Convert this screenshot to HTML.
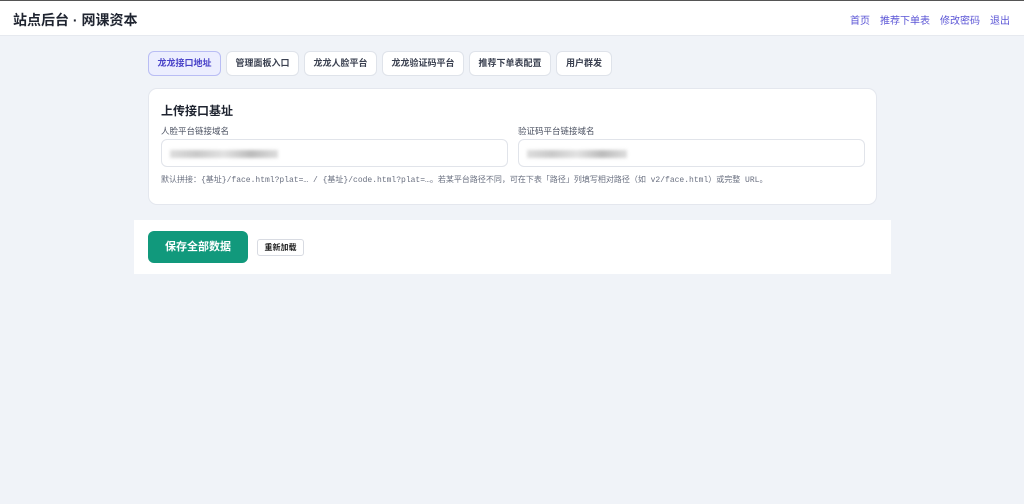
<!DOCTYPE html>
<html><head><meta charset="utf-8"><style>
*{box-sizing:border-box;margin:0;padding:0}
body{width:1024px;height:504px;background:#f0f3f8;font-family:"Liberation Sans","Noto Sans CJK SC",sans-serif;position:relative;overflow:hidden}
.top{position:absolute;left:0;top:0;width:1024px;height:1px;background:#555;z-index:5}
.hd{position:absolute;left:0;top:0;width:1024px;height:36px;background:#fff;border-bottom:1px solid #e6e9ef}
.hd h1{position:absolute;left:13px;top:10px;font-size:14px;font-weight:bold;color:#1f2430}
.nav{position:absolute;right:14px;top:12px;font-size:10px;color:#5b55d6}
.nav span{margin-left:10px}
.tab{position:absolute;top:51px;height:25px;border:1px solid #dfe3ea;background:#fff;border-radius:6px;font-size:9px;font-weight:bold;color:#3a4050;text-align:center;line-height:23px}
.tab.a{background:#eceefe;border-color:#b9bdf4;color:#4842c8}
.card{position:absolute;left:148px;top:88px;width:729px;height:117px;background:#fff;border:1px solid #e4e7ee;border-radius:9px}
.t{position:absolute;left:12px;top:13px;font-size:12px;font-weight:bold;color:#1f2430}
.lb{position:absolute;top:36px;font-size:8.5px;color:#4a5060}
.in{position:absolute;top:50px;height:28px;border:1px solid #e1e4ea;border-radius:6px;background:#fff}
.blur{position:absolute;top:10px;height:8px;background:linear-gradient(90deg,#ddd,#c9c9c9,#e2e2e2,#bbb,#ddd);filter:blur(1.5px)}
.hint{position:absolute;left:12px;top:85px;font-size:8px;color:#6a7080;white-space:nowrap;font-family:"Liberation Mono","Noto Sans CJK SC",monospace}
.bar{position:absolute;left:134px;top:220px;width:757px;height:54px;background:#fff}
.save{position:absolute;left:14px;top:11px;width:100px;height:32px;background:#11997c;border-radius:6px;color:#fff;font-size:11px;font-weight:bold;text-align:center;line-height:32px}
.re{position:absolute;left:123px;top:19px;width:47px;height:17px;border:1px solid #d8dbe2;border-radius:3px;font-size:8px;font-weight:bold;text-align:center;line-height:15px;color:#222}
</style></head><body>
<div class="top"></div>
<div class="hd"><h1>站点后台 · 网课资本</h1><div class="nav"><span>首页</span><span>推荐下单表</span><span>修改密码</span><span>退出</span></div></div>
<div class="tab a" style="left:148px;width:73px">龙龙接口地址</div>
<div class="tab" style="left:226px;width:73px">管理面板入口</div>
<div class="tab" style="left:304px;width:73px">龙龙人脸平台</div>
<div class="tab" style="left:382px;width:82px">龙龙验证码平台</div>
<div class="tab" style="left:469px;width:82px">推荐下单表配置</div>
<div class="tab" style="left:556px;width:56px">用户群发</div>
<div class="card">
<div class="t">上传接口基址</div>
<div class="lb" style="left:12px">人脸平台链接域名</div>
<div class="lb" style="left:369px">验证码平台链接域名</div>
<div class="in" style="left:12px;width:347px"><div class="blur" style="left:8px;width:108px"></div></div>
<div class="in" style="left:369px;width:347px"><div class="blur" style="left:8px;width:100px"></div></div>
<div class="hint">默认拼接：{基址}/face.html?plat=… / {基址}/code.html?plat=…。若某平台路径不同，可在下表「路径」列填写相对路径（如 v2/face.html）或完整 URL。</div>
</div>
<div class="bar"><div class="save">保存全部数据</div><div class="re">重新加载</div></div>
</body></html>
